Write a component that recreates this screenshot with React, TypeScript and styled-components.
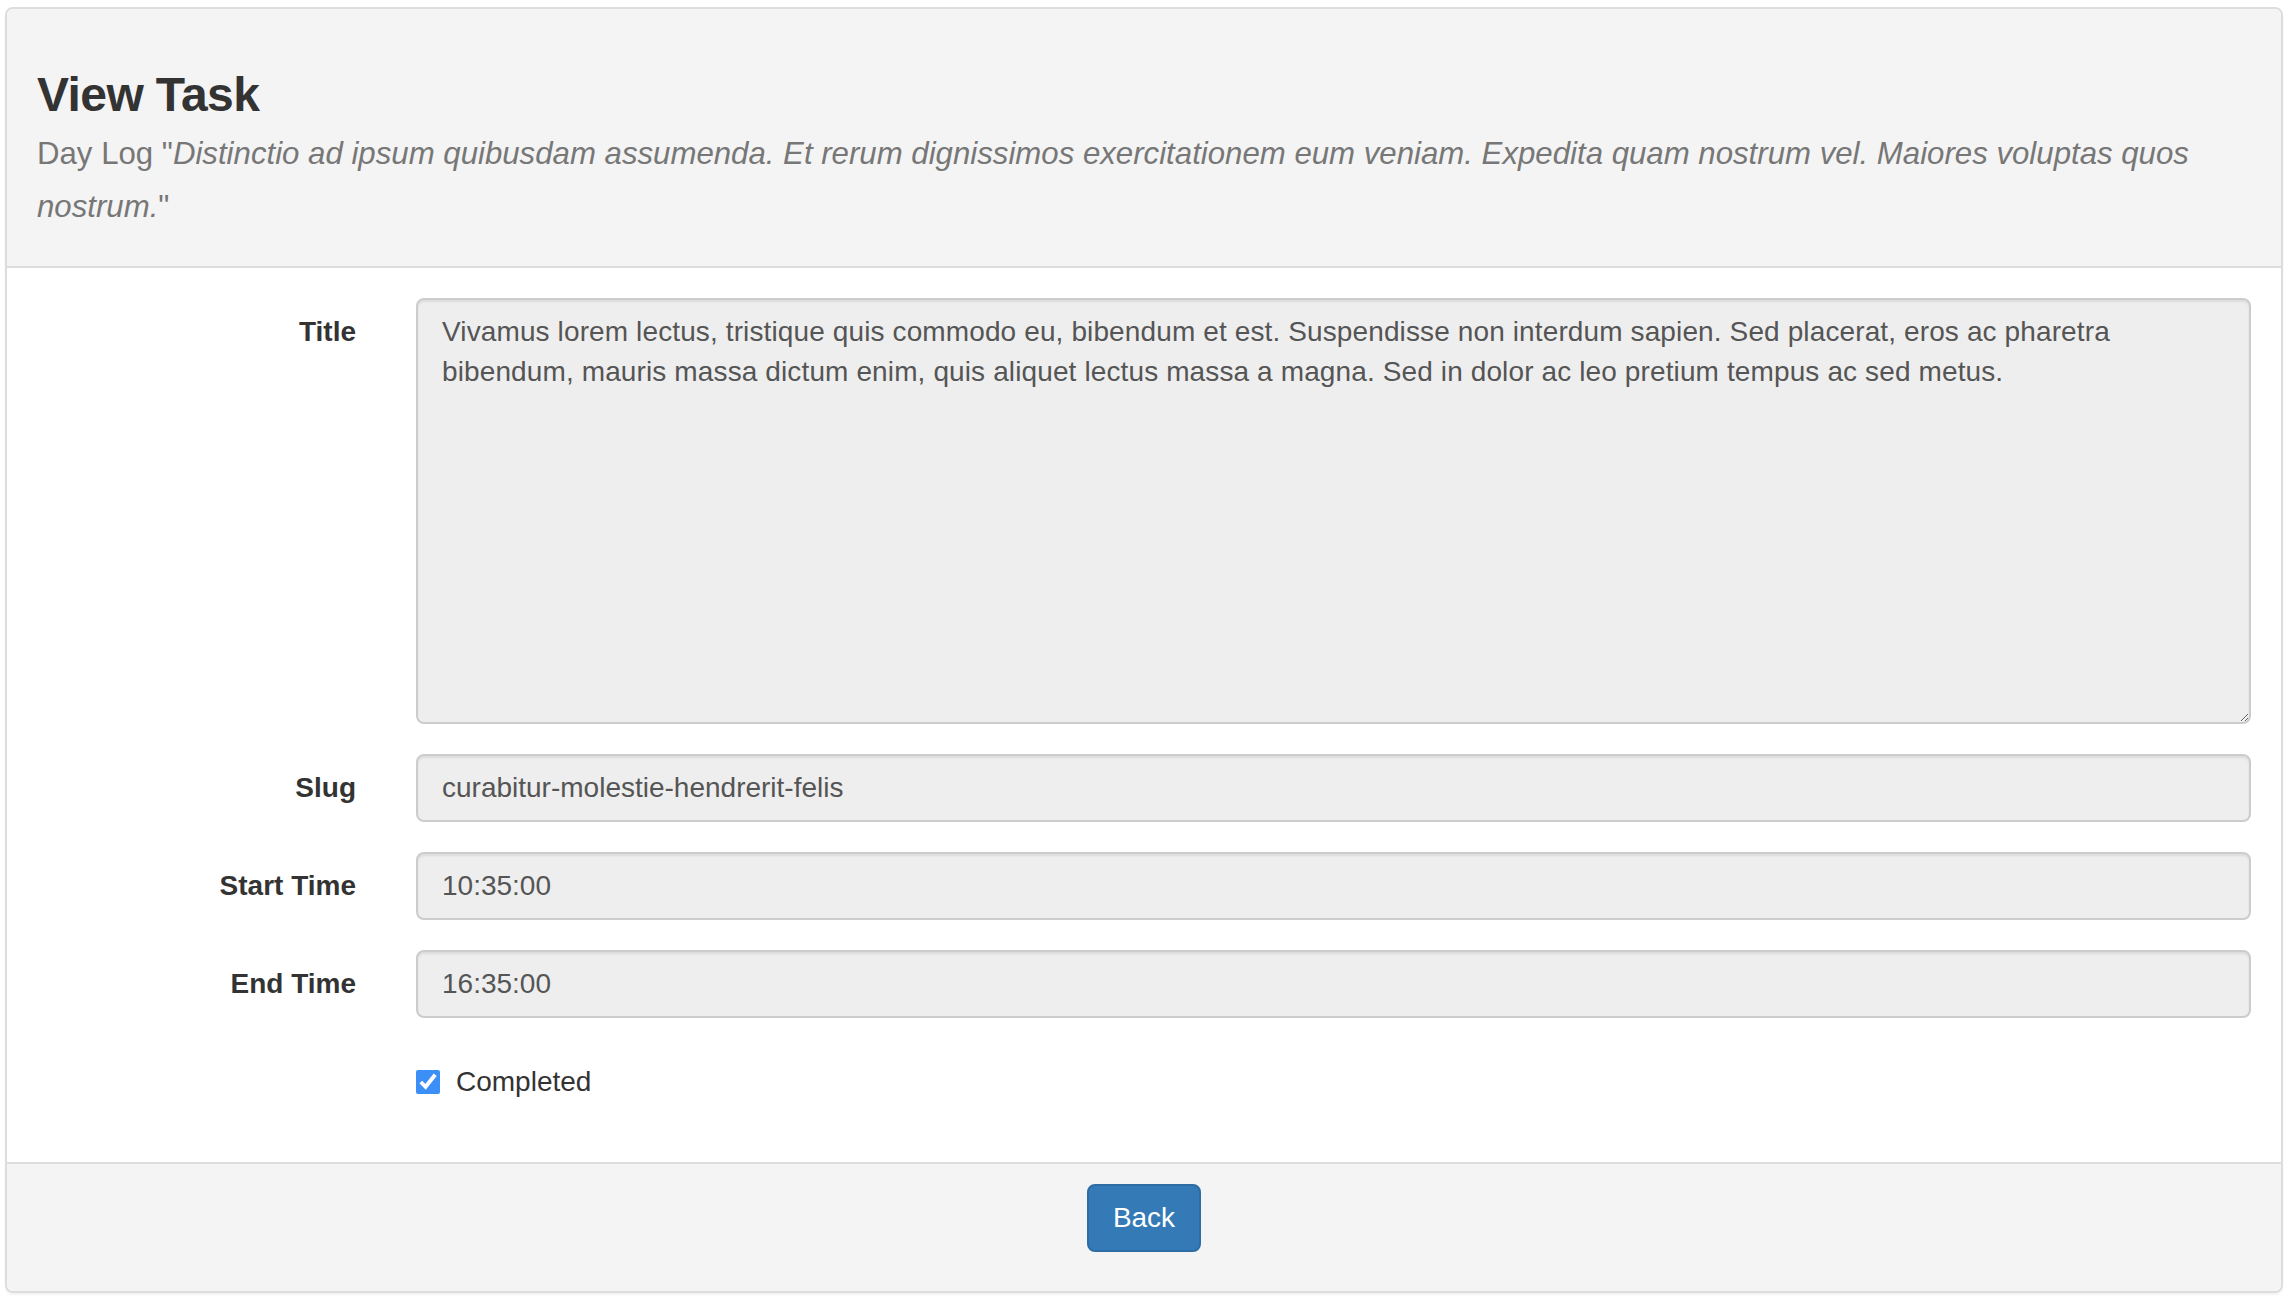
import React from "react";
import styled, { createGlobalStyle } from "styled-components";

const GlobalStyle = createGlobalStyle`
  html, body {
    margin: 0;
    padding: 0;
    background: #fff;
  }
  body {
    font-family: "Liberation Sans", Arial, sans-serif;
    font-size: 28px;
    line-height: 40px;
    color: #333;
  }
  * {
    box-sizing: border-box;
  }
`;

const Page = styled.div`
  padding: 7px 9px 6px 5px;
`;

const Panel = styled.div`
  background: #fff;
  border: 2px solid #ddd;
  border-radius: 8px;
  box-shadow: 0 2px 2px rgba(0, 0, 0, 0.05);
  overflow: hidden;
`;

const PanelHeading = styled.div`
  background: #f4f4f4;
  border-bottom: 2px solid #ddd;
  padding: 20px 30px;
`;

const Heading = styled.h3`
  margin: 40px 0 19px;
  font-size: 48px;
  font-weight: 500;
  line-height: 1.1;
  color: #333;
`;

const Title = styled.span`
  font-weight: 700;
  letter-spacing: -0.6px;
`;

const Subtitle = styled.small`
  font-size: 65%;
  font-weight: 400;
  color: #777;
`;

const PanelBody = styled.div`
  padding: 30px;
`;

const FormGroup = styled.div`
  display: flex;
  margin: 0 -30px 30px;
`;

const LabelCol = styled.label`
  flex: 0 0 16.6667%;
  padding: 14px 30px 0;
  text-align: right;
  font-weight: 700;
  line-height: 40px;
  color: #333;
`;

const FieldCol = styled.div<{ $offset?: boolean }>`
  flex: 0 0 83.3333%;
  padding: 0 30px;
  margin-left: ${(p) => (p.$offset ? "16.6667%" : "0")};
`;

const fieldStyles = `
  display: block;
  width: 100%;
  padding: 12px 24px;
  font-family: "Liberation Sans", Arial, sans-serif;
  font-size: 28px;
  line-height: 40px;
  color: #555;
  background: #eee;
  border: 2px solid #ccc;
  border-radius: 8px;
  box-shadow: inset 0 2px 2px rgba(0, 0, 0, 0.075);
  outline: none;
`;

const Input = styled.input`
  ${fieldStyles}
  height: 68px;
`;

const TextArea = styled.textarea`
  ${fieldStyles}
  height: 426px;
  resize: vertical;
  letter-spacing: 0.12px;
`;

const CheckRow = styled.label`
  display: flex;
  align-items: center;
  gap: 16px;
  padding-top: 14px;
  line-height: 40px;
  color: #333;
`;

const CheckBox = styled.input`
  width: 24px;
  height: 24px;
  margin: 0;
  accent-color: #3b8ff6;
`;

const PanelFooter = styled.div`
  background: #f4f4f4;
  border-top: 2px solid #ddd;
  padding: 20px 30px 39px;
  text-align: center;
`;

const Button = styled.button`
  display: inline-block;
  padding: 12px 24px;
  font-family: "Liberation Sans", Arial, sans-serif;
  font-size: 28px;
  line-height: 40px;
  color: #fff;
  background: #337ab7;
  border: 2px solid #2e6da4;
  border-radius: 8px;
  cursor: pointer;
`;

const fields = [
  { label: "Slug", value: "curabitur-molestie-hendrerit-felis" },
  { label: "Start Time", value: "10:35:00" },
  { label: "End Time", value: "16:35:00" },
];

export default function App() {
  return (
    <Page>
      <GlobalStyle />
      <Panel>
        <PanelHeading>
          <Heading>
            <Title>View Task</Title>
            <br />
            <Subtitle>
              Day Log "
              <em>
                Distinctio ad ipsum quibusdam assumenda. Et rerum dignissimos
                exercitationem eum veniam. Expedita quam nostrum vel. Maiores
                voluptas quos nostrum.
              </em>
              "
            </Subtitle>
          </Heading>
        </PanelHeading>
        <PanelBody>
          <FormGroup>
            <LabelCol>Title</LabelCol>
            <FieldCol>
              <TextArea
                readOnly
                value="Vivamus lorem lectus, tristique quis commodo eu, bibendum et est. Suspendisse non interdum sapien. Sed placerat, eros ac pharetra bibendum, mauris massa dictum enim, quis aliquet lectus massa a magna. Sed in dolor ac leo pretium tempus ac sed metus."
              />
            </FieldCol>
          </FormGroup>
          {fields.map((f) => (
            <FormGroup key={f.label}>
              <LabelCol>{f.label}</LabelCol>
              <FieldCol>
                <Input readOnly value={f.value} />
              </FieldCol>
            </FormGroup>
          ))}
          <FormGroup>
            <FieldCol $offset>
              <CheckRow>
                <CheckBox type="checkbox" checked readOnly />
                Completed
              </CheckRow>
            </FieldCol>
          </FormGroup>
        </PanelBody>
        <PanelFooter>
          <Button type="button">Back</Button>
        </PanelFooter>
      </Panel>
    </Page>
  );
}
